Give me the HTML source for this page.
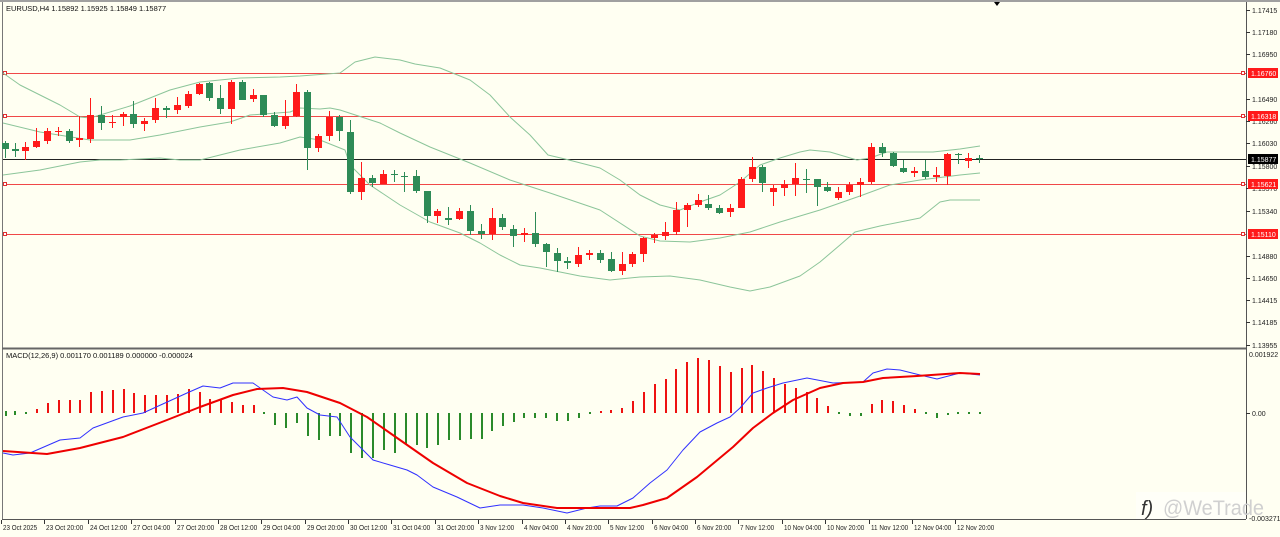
<!DOCTYPE html>
<html><head><meta charset="utf-8"><style>
html,body{margin:0;padding:0;background:#fffff2;width:1280px;height:537px;overflow:hidden}
svg{display:block}
text{font-family:"Liberation Sans",sans-serif}
</style></head><body>
<svg id="s" width="1280" height="537" xmlns="http://www.w3.org/2000/svg">
<rect width="1280" height="537" fill="#fffff2"/>
<rect x="0" y="0" width="1280" height="2" fill="#a0a0a0"/>
<line x1="2.5" y1="2" x2="2.5" y2="519" stroke="#777" stroke-width="1"/>
<line x1="1246.5" y1="2" x2="1246.5" y2="519" stroke="#555" stroke-width="1"/>
<line x1="2" y1="348.5" x2="1246" y2="348.5" stroke="#666" stroke-width="2"/>
<line x1="2" y1="519.5" x2="1246" y2="519.5" stroke="#555" stroke-width="1"/>
<g id="h"></g>
<g id="bb" fill="none" stroke="#8cc59a" stroke-width="1"></g>
<g id="c"></g>
<g id="m"></g>
<g id="ax" font-size="7" fill="#222"></g>
<text x="6" y="11" font-size="7.5" fill="#111">EURUSD,H4  1.15892 1.15925 1.15849 1.15877</text>
<text x="6" y="358" font-size="7.5" fill="#111">MACD(12,26,9) 0.001170 0.001189 0.000000 -0.000024</text>
<polygon points="994,2 1000,2 997,6" fill="#000"/>
<rect x="1136" y="492" width="110" height="27" fill="#fffff8"/>
<text x="1141" y="515" font-size="20" fill="#333" font-style="italic">f)</text>
<text x="1163" y="515" font-size="21" fill="#d0d0d0" textLength="101" lengthAdjust="spacingAndGlyphs">@WeTrade</text>
</svg>
<script>
var NS="http://www.w3.org/2000/svg";
function el(p,t,a){var e=document.createElementNS(NS,t);for(var k in a)e.setAttribute(k,a[k]);document.getElementById(p).appendChild(e);return e;}
[[73,"#f04848"],[116,"#f04848"],[184,"#f04848"],[234,"#f04848"]].forEach(function(l){
 el("h","line",{x1:3,y1:l[0]+.5,x2:1246,y2:l[0]+.5,stroke:l[1],"stroke-width":1});
 el("h","rect",{x:3.5,y:l[0]-1.5,width:3,height:3,fill:"#fff",stroke:"#e03030","stroke-width":1});
 el("h","rect",{x:1241.5,y:l[0]-1.5,width:3,height:3,fill:"#fff",stroke:"#e03030","stroke-width":1});
});
el("h","line",{x1:3,y1:159.5,x2:1246,y2:159.5,stroke:"#222","stroke-width":1});
function pl(g,pts,st,w){el(g,"polyline",{points:pts.map(function(p){return p.join(",")}).join(" "),fill:"none",stroke:st,"stroke-width":w,"stroke-linejoin":"round"});}
var up=[[3,73],[20,85],[40,95],[60,105],[80,117],[90,118],[130,106],[170,90],[200,82],[240,78],[280,77],[300,76],[340,73],[355,62],[375,57],[400,60],[415,64],[440,68],[470,80],[490,95],[510,117],[530,135],[548,155],[565,159],[600,168],[620,180],[640,195],[660,205],[680,210],[700,202],[720,195],[740,182],[760,165],[780,158],[800,152],[810,150],[830,152],[857,160],[870,158],[887,152],[933,152],[960,149],[980,146]];
var mid=[[3,123],[40,132],[90,140],[130,140],[160,135],[200,127],[230,122],[250,115],[290,112],[300,108],[320,109],[330,108],[340,110],[380,123],[400,133],[430,147],[470,163],[510,180],[550,193],[600,210],[640,236],[660,241],[690,242],[720,238],[750,232],[780,222],[820,210],[860,196],[890,185],[920,180],[960,175],[980,173]];
var lo=[[3,175],[40,170],[80,162],[100,160],[120,160],[160,158],[180,160],[200,160],[240,150],[280,143],[300,137],[320,140],[345,150],[350,165],[370,185],[400,205],[430,222],[460,233],[480,243],[500,255],[520,265],[540,268],[560,272],[580,276],[610,280],[640,277],[670,276],[700,280],[730,287],[750,291],[770,287],[800,276],[820,262],[840,245],[855,232],[880,226],[920,218],[940,202],[950,200],[980,200]];
pl("bb",up,"#8cc59a",1);pl("bb",mid,"#8cc59a",1);pl("bb",lo,"#8cc59a",1);
var C=[[5,"G",143,149,141,158],[15,"G",149,151,143,157],[25,"R",147,151,142,160],[36,"R",141,147,128,148],[47,"R",131,141,128,144],[58,"R",131,132,127,136],[69,"G",131,141,129,143],[79,"R",138,140,116,147],[90,"R",115,139,98,143],[101,"G",115,123,106,130],[112,"R",122,123,115,128],[123,"R",114,117,112,126],[133,"G",114,124,101,128],[144,"R",121,124,118,131],[155,"R",108,120,98,123],[166,"G",108,110,106,118],[177,"R",105,110,97,114],[188,"R",94,106,91,108],[199,"R",84,94,83,95],[209,"G",83,98,82,101],[220,"G",98,109,85,114],[231,"R",82,109,80,124],[242,"G",82,100,80,100],[253,"R",95,99,89,102],[263,"G",95,115,95,117],[274,"G",115,126,112,127],[285,"R",116,126,100,129],[296,"R",92,116,84,117],[307,"G",92,148,90,170],[318,"R",136,148,134,152],[329,"R",117,136,111,141],[339,"G",117,131,115,141],[350,"G",132,192,120,194],[361,"R",178,192,162,200],[372,"G",178,183,175,187],[383,"R",174,184,170,184],[394,"G",174,175,170,182],[404,"G",176,177,172,192],[416,"G",176,191,170,193],[427,"G",191,216,191,223],[437,"R",211,216,209,223],[448,"G",218,220,207,225],[459,"R",211,219,208,220],[470,"G",211,231,205,235],[481,"G",231,234,224,239],[492,"R",218,234,208,240],[502,"G",218,227,214,230],[513,"G",229,236,225,247],[524,"R",233,235,228,242],[535,"G",233,244,212,247],[546,"G",244,252,243,267],[557,"G",253,261,248,272],[567,"G",261,263,257,269],[578,"R",255,264,247,267],[589,"R",253,255,250,260],[600,"G",253,260,250,263],[611,"G",259,271,252,272],[622,"R",264,271,252,275],[632,"R",254,264,252,267],[643,"R",238,254,237,262],[654,"R",235,238,233,243],[665,"R",232,236,222,240],[676,"R",210,232,202,235],[687,"R",205,210,203,227],[698,"R",200,205,194,207],[708,"G",204,208,195,210],[719,"G",208,213,205,214],[730,"R",208,212,204,217],[741,"R",179,208,177,208],[752,"R",167,179,157,182],[762,"G",167,183,165,192],[773,"R",188,192,185,206],[784,"R",184,188,180,196],[795,"R",178,184,163,196],[806,"G",179,180,169,193],[817,"G",179,187,179,206],[827,"G",187,191,182,192],[838,"R",192,198,187,200],[849,"R",185,192,182,195],[860,"R",182,185,178,197],[871,"R",147,182,143,184],[882,"G",147,153,143,157],[893,"G",153,166,152,167],[903,"G",168,172,160,173],[914,"R",171,173,167,177],[925,"G",171,177,160,179],[936,"R",175,177,167,182],[947,"R",154,176,153,185],[958,"G",154,155,153,164],[968,"R",158,161,153,168],[979,"G",158,159,155,163]];
C.forEach(function(c){var col=c[1]=="G"?"#2e8b57":"#ff1a1a";
 el("c","line",{x1:c[0]+.5,y1:c[4],x2:c[0]+.5,y2:c[5],stroke:col,"stroke-width":1});
 el("c","rect",{x:c[0]-3,y:c[2],width:7,height:Math.max(1,c[3]-c[2]),fill:col});
});
var H=[[5,411,416,"G"],[14,411,415,"G"],[36,409,413,"R"],[47,403,413,"R"],[58,400,413,"R"],[69,400,413,"R"],[79,400,413,"R"],[90,392,413,"R"],[101,391,413,"R"],[112,390,413,"R"],[123,389,413,"R"],[133,393,413,"R"],[144,395,413,"R"],[155,395,413,"R"],[166,395,413,"R"],[177,394,413,"R"],[188,389,413,"R"],[199,392,413,"R"],[209,399,413,"R"],[220,399,413,"R"],[231,402,413,"R"],[242,405,413,"R"],[253,405,413,"R"],[274,413,425,"G"],[285,413,428,"G"],[296,413,423,"G"],[307,413,436,"G"],[318,413,440,"G"],[329,413,436,"G"],[339,413,436,"G"],[350,413,453,"G"],[361,413,458,"G"],[372,413,458,"G"],[383,413,450,"G"],[394,413,453,"G"],[405,413,444,"G"],[416,413,445,"G"],[426,413,448,"G"],[437,413,445,"G"],[448,413,440,"G"],[459,413,440,"G"],[470,413,439,"G"],[481,413,439,"G"],[491,413,431,"G"],[502,413,426,"G"],[513,413,422,"G"],[523,413,418,"G"],[534,413,418,"G"],[545,413,418,"G"],[556,413,421,"G"],[567,413,421,"G"],[578,413,418,"G"],[600,411,413,"R"],[610,410,413,"R"],[621,408,413,"R"],[632,401,413,"R"],[643,392,413,"R"],[654,384,413,"R"],[665,379,413,"R"],[675,369,413,"R"],[686,362,413,"R"],[697,358,413,"R"],[708,360,413,"R"],[719,366,413,"R"],[730,372,413,"R"],[741,368,413,"R"],[751,365,413,"R"],[762,371,413,"R"],[773,378,413,"R"],[784,384,413,"R"],[795,388,413,"R"],[806,392,413,"R"],[816,398,413,"R"],[827,406,413,"R"],[849,413,416,"G"],[860,413,416,"G"],[871,404,413,"R"],[881,400,413,"R"],[892,401,413,"R"],[903,405,413,"R"],[914,409,413,"R"],[936,413,418,"G"],[947,413,415,"G"]];
H.forEach(function(h){el("m","rect",{x:h[0],y:h[1],width:2,height:h[2]-h[1],fill:h[3]=="G"?"#2a8a2a":"#ee1111"});});
[25,263,589,838,925,957,968,979].forEach(function(x){el("m","rect",{x:x,y:412,width:2,height:2,fill:"#2a8a2a"});});
var sig=[[3,451],[47,454],[80,448],[123,437],[167,420],[200,407],[233,395],[257,389],[283,388],[307,392],[340,403],[367,417],[400,440],[433,463],[467,483],[500,496],[523,503],[557,508],[600,508],[630,508],[643,505],[667,498],[697,477],[733,447],[753,428],[773,413],[793,400],[820,388],[843,383],[863,382],[883,378],[917,376],[960,373],[980,374]];
var mac=[[3,453],[13,455],[30,453],[60,440],[80,438],[93,428],[123,417],[143,413],[187,393],[203,386],[220,388],[233,383],[253,383],[273,397],[287,400],[297,397],[307,408],[320,415],[337,417],[350,437],[363,450],[373,460],[390,465],[407,470],[417,475],[433,487],[457,497],[480,508],[500,505],[523,505],[543,508],[567,513],[587,508],[600,506],[617,506],[633,498],[650,483],[667,470],[683,450],[700,432],[717,423],[730,417],[740,408],[753,393],[767,388],[783,383],[807,378],[833,383],[863,382],[873,373],[887,369],[900,370],[920,375],[937,379],[960,373],[980,375]];
pl("m",mac,"#3030ff",1);pl("m",sig,"#ee0000",2);
[[10,"1.17415"],[32,"1.17180"],[54,"1.16950"],[99,"1.16490"],[121,"1.16260"],[143,"1.16030"],[166,"1.15800"],[188,"1.15570"],[211,"1.15340"],[256,"1.14880"],[278,"1.14650"],[300,"1.14415"],[322,"1.14185"],[345,"1.13955"],[413,"0.00"]].forEach(function(a){
 el("ax","line",{x1:1246,y1:a[0]+.5,x2:1250,y2:a[0]+.5,stroke:"#333"});
 el("ax","text",{x:1252,y:a[0]+3}).textContent=a[1];});
el("ax","text",{x:1249,y:357}).textContent="0.001922";
el("ax","text",{x:1249,y:521}).textContent="-0.003271";
[[73,"1.16760","#ff1a1a"],[116,"1.16318","#ff1a1a"],[159,"1.15877","#000"],[184,"1.15621","#ff1a1a"],[234,"1.15110","#ff1a1a"]].forEach(function(a){
 el("ax","rect",{x:1248,y:a[0]-5,width:30,height:10,fill:a[2]});
 el("ax","text",{x:1251,y:a[0]+3,fill:"#fff"}).textContent=a[1];});
[[3,"23 Oct 2025"],[46,"23 Oct 20:00"],[90,"24 Oct 12:00"],[133,"27 Oct 04:00"],[177,"27 Oct 20:00"],[220,"28 Oct 12:00"],[263,"29 Oct 04:00"],[307,"29 Oct 20:00"],[350,"30 Oct 12:00"],[393,"31 Oct 04:00"],[437,"31 Oct 20:00"],[480,"3 Nov 12:00"],[524,"4 Nov 04:00"],[567,"4 Nov 20:00"],[610,"5 Nov 12:00"],[654,"6 Nov 04:00"],[697,"6 Nov 20:00"],[740,"7 Nov 12:00"],[784,"10 Nov 04:00"],[827,"10 Nov 20:00"],[871,"11 Nov 12:00"],[914,"12 Nov 04:00"],[957,"12 Nov 20:00"]].forEach(function(a){
 el("ax","line",{x1:a[0]-1.5,y1:520,x2:a[0]-1.5,y2:524,stroke:"#333"});
 el("ax","text",{x:a[0],y:530,textLength:a[1].length*3.1,lengthAdjust:"spacingAndGlyphs"}).textContent=a[1];});
</script>
</body></html>
